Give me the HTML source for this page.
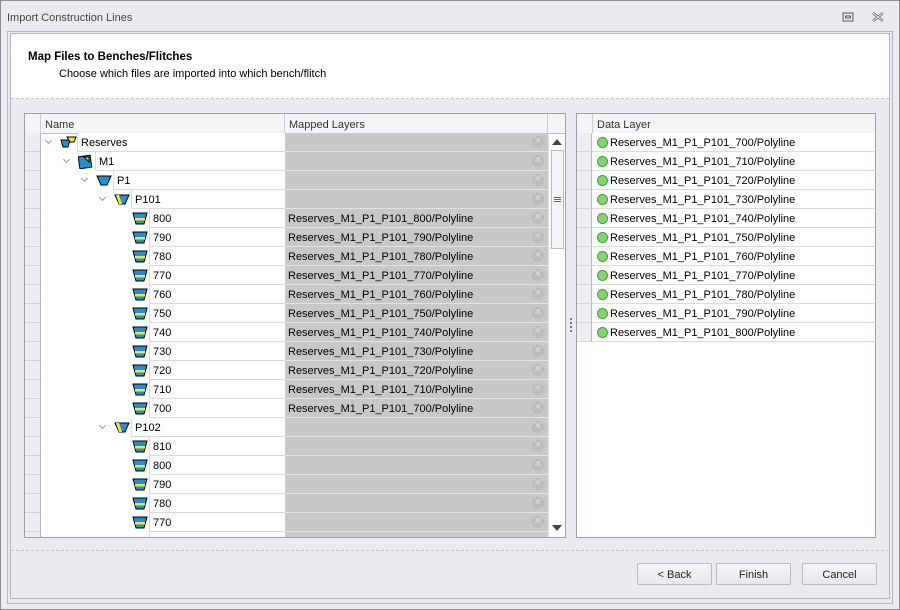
<!DOCTYPE html>
<html><head><meta charset="utf-8"><style>
*{box-sizing:border-box;margin:0;padding:0}
body{width:900px;height:610px;background:#e9ebef;font-family:"Liberation Sans",sans-serif;font-size:11px;color:#000;position:relative;overflow:hidden}
.a{position:absolute}
.win{left:0;top:0;width:900px;height:610px;border:1px solid #8c9096}
.title{left:7px;top:12px;color:#444;font-size:11px}
.frame1{left:7px;top:31px;width:886px;height:573px;border:1px solid #b4b8be}
.frame2{left:10px;top:33px;width:880px;height:566px;border:1px solid #b4b8be}
.hdr{left:11px;top:34px;width:878px;height:65px;background:#fff;border-bottom:1px dashed #c4c7cc}
.h1{left:28px;top:51px;font-weight:bold;font-size:11.5px}
.h2{left:59px;top:68px;font-size:11px}
.grid{left:24px;top:113px;width:542px;height:425px;border:1px solid #9da2aa;background:#fff;overflow:hidden}
.gh{position:absolute;top:0;height:20px;background:#f3f4f6;border-bottom:1px solid #b9bcc2;border-right:1px solid #c9ccd1;color:#333;padding:5px 0 0 4px}
.ind{position:absolute;left:0;width:16px;height:19px;background:#eceef1;border-right:1px solid #b4b8be;border-bottom:1px solid #d4d6da}
.nc{position:absolute;height:19px;border-left:1px solid #dcdcdc;border-bottom:1px solid #dcdcdc;padding:4px 0 0 3px;background:#fff}
.mc{position:absolute;left:260px;width:263px;height:19px;background:#c8c8c8;border-bottom:1px solid #e2e2e2;padding:4px 0 0 3px}
.x{position:absolute;right:4px;top:3px;width:12px;height:12px;border-radius:50%;background:#bcbcbc;color:#dedede;font-size:10px;line-height:12px;text-align:center}
.arr{position:absolute;width:5px;height:5px;border-right:1.5px solid #999;border-bottom:1.5px solid #999;transform:rotate(45deg)}
.ic{position:absolute}
.btn{top:563px;width:75px;height:22px;border:1px solid #b8bcc3;border-radius:2px;background:linear-gradient(#f4f5f7,#e6e8eb);text-align:center;padding-top:5px;color:#222;font-size:11px}
.rg{left:576px;top:113px;width:300px;height:425px;border:1px solid #9da2aa;background:#fff}
.dot{position:absolute;left:4px;top:4px;width:11px;height:11px;border-radius:50%;background:#7fd86a;border:1px solid #4a9a40}
</style></head><body>
<div class="a win"></div>
<div class="a title">Import Construction Lines</div>
<svg class="a" style="left:842px;top:12px" width="12" height="10"><rect x="1" y="1" width="10" height="8" fill="none" stroke="#555"/><rect x="3.5" y="4" width="5" height="2" fill="none" stroke="#555"/></svg>
<svg class="a" style="left:872px;top:12px" width="12" height="10"><path d="M1 1l10 8M11 1L1 9" stroke="#666" stroke-width="2.5"/><path d="M1 1l10 8M11 1L1 9" stroke="#eee" stroke-width="1"/></svg>
<div class="a frame1"></div>
<div class="a frame2"></div>
<div class="a hdr"></div>
<div class="a h1">Map Files to Benches/Flitches</div>
<div class="a h2">Choose which files are imported into which bench/flitch</div>

<div class="a grid">
<div class="gh" style="left:0;width:16px"></div>
<div class="gh" style="left:16px;width:244px">Name</div>
<div class="gh" style="left:260px;width:263px">Mapped Layers</div>
<div class="gh" style="left:523px;width:19px;border-right:none"></div>
<div class="a" style="left:523px;top:20px;width:18px;height:405px;background:#fff;border-left:1px solid #e0e0e0"></div>
<svg class="a" style="left:527px;top:25px" width="10" height="6"><path d="M0 6L5 0L10 6Z" fill="#444"/></svg>
<div class="a" style="left:526px;top:36px;width:13px;height:99px;background:#f4f5f7;border:1px solid #b9bcc2"></div>
<div class="a" style="left:529px;top:83px;width:7px;height:5px;border-top:1px solid #666;border-bottom:1px solid #666"></div>
<div class="a" style="left:529px;top:85px;width:7px;height:1px;background:#666"></div>
<svg class="a" style="left:527px;top:411px" width="10" height="6"><path d="M0 0L5 6L10 0Z" fill="#444"/></svg>
</div>

<svg class="a" style="left:569px;top:318px" width="4" height="16"><g fill="#777"><rect x="1" y="0" width="2" height="2"/><rect x="1" y="4" width="2" height="2"/><rect x="1" y="8" width="2" height="2"/><rect x="1" y="12" width="2" height="2"/></g></svg>

<div class="a rg">
<div class="gh" style="left:0;width:16px"></div>
<div class="gh" style="left:16px;width:282px;border-right:none">Data Layer</div>
</div>

<div class="a" style="left:11px;top:550px;width:878px;border-top:1px dashed #c4c7cc"></div>
<div class="a btn" style="left:637px">&lt; Back</div>
<div class="a btn" style="left:716px">Finish</div>
<div class="a btn" style="left:802px">Cancel</div>

<div class="a" style="left:25px;top:133px;width:523px;height:404px;overflow:hidden">
<div style="position:absolute;left:0;top:0;width:523px;height:19px"><div class="ind"></div><div class="arr" style="left:21px;top:5px"></div><svg class="ic" style="left:35px;top:3px" width="17" height="13"><path d="M1 4h9l-2 7h-5z" fill="#1e8fd8" stroke="#000"/><path d="M7 1h9l-2 5h-4z" fill="#f5e61e" stroke="#000"/></svg><div class="nc" style="left:52px;width:208px">Reserves</div><div class="mc"><span class="x">✕</span></div></div>
<div style="position:absolute;left:0;top:19px;width:523px;height:19px"><div class="ind"></div><div class="arr" style="left:39px;top:5px"></div><svg class="ic" style="left:53px;top:2px" width="15" height="15"><rect x="1" y="2" width="12" height="12" fill="#1e8fd8" stroke="#000" transform="rotate(-8 7 8)"/><path d="M6 3l5 0 0 5z" fill="#f5e61e" stroke="#000"/></svg><div class="nc" style="left:70px;width:190px">M1</div><div class="mc"><span class="x">✕</span></div></div>
<div style="position:absolute;left:0;top:38px;width:523px;height:19px"><div class="ind"></div><div class="arr" style="left:57px;top:5px"></div><svg class="ic" style="left:71px;top:4px" width="16" height="11"><path d="M1 1h14l-4 9h-6z" fill="#1e8fd8" stroke="#000"/></svg><div class="nc" style="left:88px;width:172px">P1</div><div class="mc"><span class="x">✕</span></div></div>
<div style="position:absolute;left:0;top:57px;width:523px;height:19px"><div class="ind"></div><div class="arr" style="left:75px;top:5px"></div><svg class="ic" style="left:89px;top:4px" width="16" height="11"><path d="M1 1h14l-4 9h-6z" fill="#1e8fd8" stroke="#000"/><path d="M2 1h3l3 9h-3z" fill="#f5e61e"/></svg><div class="nc" style="left:106px;width:154px">P101</div><div class="mc"><span class="x">✕</span></div></div>
</div>

<div class="a" style="left:25px;top:209px;width:523px;height:328px;overflow:hidden">
<div style="position:absolute;left:0;top:0;width:523px"><div class="ind" style="top:0"></div><div class="ind" style="top:19px"></div><div class="ind" style="top:38px"></div><div class="ind" style="top:57px"></div><div class="ind" style="top:76px"></div><div class="ind" style="top:95px"></div><div class="ind" style="top:114px"></div><div class="ind" style="top:133px"></div><div class="ind" style="top:152px"></div><div class="ind" style="top:171px"></div><div class="ind" style="top:190px"></div><div class="ind" style="top:209px"></div><div class="ind" style="top:228px"></div><div class="ind" style="top:247px"></div><div class="ind" style="top:266px"></div><div class="ind" style="top:285px"></div><div class="ind" style="top:304px"></div><div class="ind" style="top:323px"></div></div>
</div>

<style>
.lr{position:absolute;left:25px;width:523px;height:19px}
.lr .nc{left:124px;width:136px}
.lr svg{position:absolute;left:107px;top:3px}
</style>
<div class="lr" style="top:209px"><svg width="16" height="13"><path d="M1 1h14l-3 11h-8z" fill="#1e8fd8" stroke="#000"/><rect x="3" y="6" width="10" height="2.5" fill="#f5e61e"/></svg><div class="nc">800</div><div class="mc">Reserves_M1_P1_P101_800/Polyline<span class="x">✕</span></div></div>
<div class="lr" style="top:228px"><svg width="16" height="13"><path d="M1 1h14l-3 11h-8z" fill="#1e8fd8" stroke="#000"/><rect x="3" y="6" width="10" height="2.5" fill="#f5e61e"/></svg><div class="nc">790</div><div class="mc">Reserves_M1_P1_P101_790/Polyline<span class="x">✕</span></div></div>
<div class="lr" style="top:247px"><svg width="16" height="13"><path d="M1 1h14l-3 11h-8z" fill="#1e8fd8" stroke="#000"/><rect x="3" y="6" width="10" height="2.5" fill="#f5e61e"/></svg><div class="nc">780</div><div class="mc">Reserves_M1_P1_P101_780/Polyline<span class="x">✕</span></div></div>
<div class="lr" style="top:266px"><svg width="16" height="13"><path d="M1 1h14l-3 11h-8z" fill="#1e8fd8" stroke="#000"/><rect x="3" y="6" width="10" height="2.5" fill="#f5e61e"/></svg><div class="nc">770</div><div class="mc">Reserves_M1_P1_P101_770/Polyline<span class="x">✕</span></div></div>
<div class="lr" style="top:285px"><svg width="16" height="13"><path d="M1 1h14l-3 11h-8z" fill="#1e8fd8" stroke="#000"/><rect x="3" y="6" width="10" height="2.5" fill="#f5e61e"/></svg><div class="nc">760</div><div class="mc">Reserves_M1_P1_P101_760/Polyline<span class="x">✕</span></div></div>
<div class="lr" style="top:304px"><svg width="16" height="13"><path d="M1 1h14l-3 11h-8z" fill="#1e8fd8" stroke="#000"/><rect x="3" y="6" width="10" height="2.5" fill="#f5e61e"/></svg><div class="nc">750</div><div class="mc">Reserves_M1_P1_P101_750/Polyline<span class="x">✕</span></div></div>
<div class="lr" style="top:323px"><svg width="16" height="13"><path d="M1 1h14l-3 11h-8z" fill="#1e8fd8" stroke="#000"/><rect x="3" y="6" width="10" height="2.5" fill="#f5e61e"/></svg><div class="nc">740</div><div class="mc">Reserves_M1_P1_P101_740/Polyline<span class="x">✕</span></div></div>
<div class="lr" style="top:342px"><svg width="16" height="13"><path d="M1 1h14l-3 11h-8z" fill="#1e8fd8" stroke="#000"/><rect x="3" y="6" width="10" height="2.5" fill="#f5e61e"/></svg><div class="nc">730</div><div class="mc">Reserves_M1_P1_P101_730/Polyline<span class="x">✕</span></div></div>
<div class="lr" style="top:361px"><svg width="16" height="13"><path d="M1 1h14l-3 11h-8z" fill="#1e8fd8" stroke="#000"/><rect x="3" y="6" width="10" height="2.5" fill="#f5e61e"/></svg><div class="nc">720</div><div class="mc">Reserves_M1_P1_P101_720/Polyline<span class="x">✕</span></div></div>
<div class="lr" style="top:380px"><svg width="16" height="13"><path d="M1 1h14l-3 11h-8z" fill="#1e8fd8" stroke="#000"/><rect x="3" y="6" width="10" height="2.5" fill="#f5e61e"/></svg><div class="nc">710</div><div class="mc">Reserves_M1_P1_P101_710/Polyline<span class="x">✕</span></div></div>
<div class="lr" style="top:399px"><svg width="16" height="13"><path d="M1 1h14l-3 11h-8z" fill="#1e8fd8" stroke="#000"/><rect x="3" y="6" width="10" height="2.5" fill="#f5e61e"/></svg><div class="nc">700</div><div class="mc">Reserves_M1_P1_P101_700/Polyline<span class="x">✕</span></div></div>
<div class="lr" style="top:418px"><div class="arr" style="left:75px;top:5px"></div><svg width="16" height="11" style="left:89px;top:4px"><path d="M1 1h14l-4 9h-6z" fill="#1e8fd8" stroke="#000"/><path d="M2 1h3l3 9h-3z" fill="#f5e61e"/></svg><div class="nc" style="left:106px;width:154px">P102</div><div class="mc"><span class="x">✕</span></div></div>
<div class="lr" style="top:437px"><svg width="16" height="13"><path d="M1 1h14l-3 11h-8z" fill="#1e8fd8" stroke="#000"/><rect x="3" y="6" width="10" height="2.5" fill="#f5e61e"/></svg><div class="nc">810</div><div class="mc"><span class="x">✕</span></div></div>
<div class="lr" style="top:456px"><svg width="16" height="13"><path d="M1 1h14l-3 11h-8z" fill="#1e8fd8" stroke="#000"/><rect x="3" y="6" width="10" height="2.5" fill="#f5e61e"/></svg><div class="nc">800</div><div class="mc"><span class="x">✕</span></div></div>
<div class="lr" style="top:475px"><svg width="16" height="13"><path d="M1 1h14l-3 11h-8z" fill="#1e8fd8" stroke="#000"/><rect x="3" y="6" width="10" height="2.5" fill="#f5e61e"/></svg><div class="nc">790</div><div class="mc"><span class="x">✕</span></div></div>
<div class="lr" style="top:494px"><svg width="16" height="13"><path d="M1 1h14l-3 11h-8z" fill="#1e8fd8" stroke="#000"/><rect x="3" y="6" width="10" height="2.5" fill="#f5e61e"/></svg><div class="nc">780</div><div class="mc"><span class="x">✕</span></div></div>
<div class="lr" style="top:513px"><svg width="16" height="13"><path d="M1 1h14l-3 11h-8z" fill="#1e8fd8" stroke="#000"/><rect x="3" y="6" width="10" height="2.5" fill="#f5e61e"/></svg><div class="nc">770</div><div class="mc"><span class="x">✕</span></div></div>
<div class="lr" style="top:532px;height:5px;overflow:hidden"><div class="nc"></div><div class="mc"></div></div>

<style>
.rr{position:absolute;left:577px;width:298px;height:19px}
.rr .ind{width:15px}
.rr .nc{left:15px;width:283px;padding-left:18px;border-left:none}
.rr .dot{left:20px}
</style>
<div class="rr" style="top:133px"><div class="ind"></div><div class="nc">Reserves_M1_P1_P101_700/Polyline</div><div class="dot"></div></div>
<div class="rr" style="top:152px"><div class="ind"></div><div class="nc">Reserves_M1_P1_P101_710/Polyline</div><div class="dot"></div></div>
<div class="rr" style="top:171px"><div class="ind"></div><div class="nc">Reserves_M1_P1_P101_720/Polyline</div><div class="dot"></div></div>
<div class="rr" style="top:190px"><div class="ind"></div><div class="nc">Reserves_M1_P1_P101_730/Polyline</div><div class="dot"></div></div>
<div class="rr" style="top:209px"><div class="ind"></div><div class="nc">Reserves_M1_P1_P101_740/Polyline</div><div class="dot"></div></div>
<div class="rr" style="top:228px"><div class="ind"></div><div class="nc">Reserves_M1_P1_P101_750/Polyline</div><div class="dot"></div></div>
<div class="rr" style="top:247px"><div class="ind"></div><div class="nc">Reserves_M1_P1_P101_760/Polyline</div><div class="dot"></div></div>
<div class="rr" style="top:266px"><div class="ind"></div><div class="nc">Reserves_M1_P1_P101_770/Polyline</div><div class="dot"></div></div>
<div class="rr" style="top:285px"><div class="ind"></div><div class="nc">Reserves_M1_P1_P101_780/Polyline</div><div class="dot"></div></div>
<div class="rr" style="top:304px"><div class="ind"></div><div class="nc">Reserves_M1_P1_P101_790/Polyline</div><div class="dot"></div></div>
<div class="rr" style="top:323px"><div class="ind"></div><div class="nc">Reserves_M1_P1_P101_800/Polyline</div><div class="dot"></div></div>
</body></html>
